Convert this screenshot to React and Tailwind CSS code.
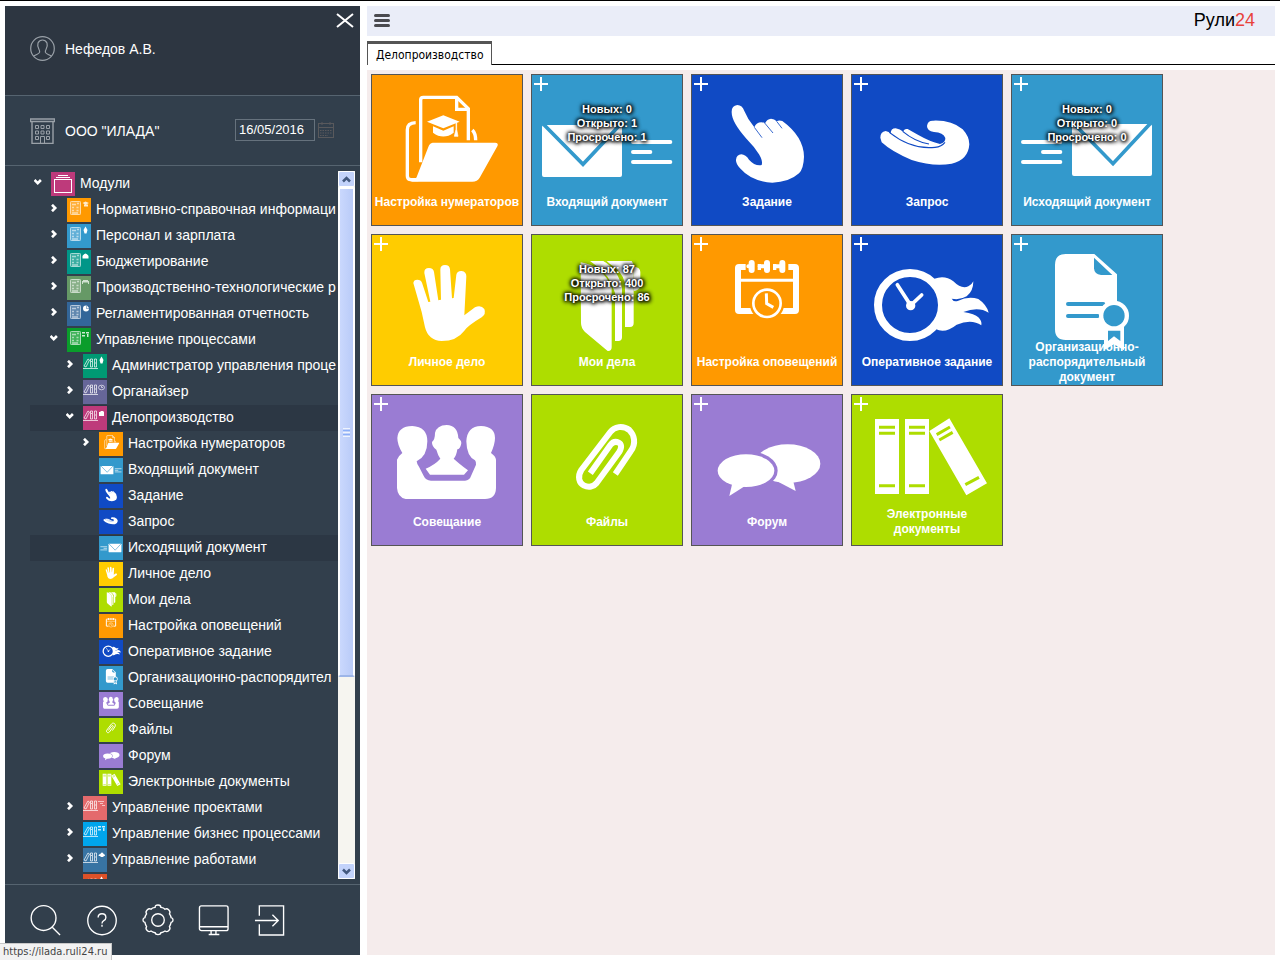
import { useState } from 'react';

const ORANGE = '#ff9900';
const BLUE = '#3399cc';
const NAVY = '#104ac4';
const LIME = '#aedd00';
const VIOLET = '#9a7cd3';

// Every tile picture is drawn on a 450 x 450 field
const pictures = {
    numerators: {
        origin: '21 30',
        art: (
            <>
                <g fill="none" stroke="#fff" strokeWidth="10">
                    <path d="M152 173Q127 174 127 194V333Q127 344 138 344H160" />
                    <path d="M167 292V104Q167 97 175 97H275L310 131V226" />
                    <path d="M275 97V133H310" />
                    <path d="M322 195Q332 205 332 226" />
                </g>
                <path d="M203 233H390Q402 234 397 244L344 338Q337 350 322 350H135Q150 348 155 336L190 246Q194 234 203 233Z" />
                <path d="M186 170L235 151L284 170L235 190ZM204 184L235 197L266 184V203Q235 226 204 203Z" />
                <path d="M273 174V193L268 214H279L275 193V174Z" stroke="#fff" strokeWidth="2" />
            </>
        ),
    },
    inbox: {
        origin: '501 30',
        art: (
            <>
                <rect x="531" y="180" width="240" height="156" rx="6" />
                <path d="M534 176L654 298L768 176" fill="none" stroke={BLUE} strokeWidth="11" />
                <path d="M804 231H916M804 261H856M804 291H916" stroke="#fff" strokeWidth="12" strokeLinecap="round" />
            </>
        ),
    },
    task: {
        origin: '21 30',
        art: (
            <>
                <path d="M140 142Q139 122 157 120Q172 120 178 138Q188 163 208 187Q214 172 229 172Q236 172 240 175Q246 162 258 161Q268 162 275 169Q282 164 292 168Q356 215 357 275Q356 310 342 325Q312 352 262 353Q200 350 165 310Q152 295 153 284Q155 269 169 268Q182 269 192 284Q210 304 230 300Q234 288 222 268Q208 245 185 222Q140 172 140 142Z" />
                <path d="M208 187L231 218M239 174L264 204M275 169L291 190" stroke={NAVY} strokeWidth="2.5" />
            </>
        ),
    },
    request: {
        origin: '501 30',
        art: (
            <>
                <path d="M586 218Q586 200 602 198Q612 200 617 206Q617 190 632 190Q645 193 655 200Q657 190 668 192L700 210Q735 230 765 237Q782 232 781 219Q775 202 747 201Q726 198 726 183Q728 166 745 167Q800 165 833 193Q853 215 853 238Q850 285 800 296Q745 306 680 285Q620 260 590 232Z" />
                <path d="M613 202Q680 255 750 247Q770 245 780 232M653 199Q690 230 732 237" fill="none" stroke={NAVY} strokeWidth="3.5" />
            </>
        ),
    },
    outbox: {
        origin: '21 30',
        art: (
            <>
                <rect x="201" y="177" width="240" height="156" rx="6" />
                <path d="M204 173L324 296L438 173" fill="none" stroke={BLUE} strokeWidth="11" />
                <path d="M54 231H166M114 261H166M54 291H166" stroke="#fff" strokeWidth="12" strokeLinecap="round" />
            </>
        ),
    },
    personal: {
        origin: '21 21',
        art: (
            <path d="M145 165Q146 155 157 155Q168 155 171 164L190 222L196 221L178 135Q177 120 192 120Q205 120 207 132L220 217L228 215L226 125Q226 111 240 111Q254 111 255 124L261 211L266 210L274 140Q277 128 290 129Q304 131 304 145L298 262L330 238Q348 230 358 243Q364 258 350 268Q310 292 298 308Q275 339 230 339Q190 338 180 298L170 252Z" />
        ),
    },
    cases: {
        origin: '501 21',
        art: (
            <>
                <path d="M647 103Q715 115 740 180V358Q740 370 728 369L660 312Q648 300 648 285Z" />
                <path d="M675 99H715Q760 125 771 180V328Q771 339 760 339H750V195Q735 140 690 110Z" />
                <path d="M725 99H800L806 110V285Q806 297 795 297H780V165Q772 130 735 108Z" />
                <path d="M806 116Q826 117 826 132V172Q824 188 806 189Z" />
            </>
        ),
    },
    alerts: {
        origin: '21 21',
        art: (
            <>
                <rect x="159" y="117" width="174" height="132" rx="3" fill="none" stroke="#fff" strokeWidth="18" />
                <path d="M168 157H324" stroke="#fff" strokeWidth="9" />
                <path d="M182 105H218V127H182ZM228 105H264V127H228ZM274 105H310V127H274Z" fill={ORANGE} />
                <g stroke="#fff" strokeWidth="18" strokeLinecap="round">
                    <path d="M200 105V126M246 105V126M292 105V126" />
                    <path d="M190 115H200M224 115H246M271 115H292" strokeWidth="12" />
                </g>
                <circle cx="246" cy="226" r="52" fill={ORANGE} />
                <circle cx="246" cy="226" r="41" fill="none" stroke="#fff" strokeWidth="8" />
                <path d="M244 196L245 227L265 238" fill="none" stroke="#fff" strokeWidth="9" />
            </>
        ),
    },
    urgent: {
        origin: '501 21',
        art: (
            <>
                <circle cx="675" cy="231" r="96" fill="none" stroke="#fff" strokeWidth="24" />
                <path d="M748 152Q780 140 805 160Q830 185 850 175Q862 168 865 160Q865 190 845 205Q825 217 800 212Q806 223 818 219Q850 203 880 213Q905 230 911 254Q880 235 835 252Q870 258 880 268Q892 280 889 292Q860 272 815 290Q780 318 752 303Q770 270 766 231Q768 190 748 152Z" />
                <path d="M637 170L677 232L710 201" fill="none" stroke="#fff" strokeWidth="11" strokeLinecap="round" />
                <circle cx="677" cy="233" r="14" />
            </>
        ),
    },
    order: {
        origin: '21 30',
        art: (
            <>
                <path d="M182 87H268L336 148V230L300 300V345H182Q150 345 150 313V120Q150 87 182 87Z" />
                <path d="M267 98V130Q268 148 288 150H322Z" fill={BLUE} />
                <path d="M189 237H295M189 273H278" stroke={BLUE} strokeWidth="12" strokeLinecap="round" />
                <circle cx="327" cy="272" r="45" />
                <circle cx="327" cy="272" r="32" fill={BLUE} />
                <path d="M297 300V376L327 358L357 376V300L345 312H309Z" />
                <path d="M309 317H346V348L327 334L309 348Z" fill={BLUE} />
            </>
        ),
    },
    meeting: {
        origin: '21 21',
        art: (
            <>
                <path d="M97 150Q99 115 142 114Q187 116 187 160Q187 205 155 220Q155 226 162 236L175 262Q182 278 198 278H300Q314 277 318 264L333 230Q335 224 330 217Q305 205 304 160Q306 115 348 114Q390 116 390 150Q390 168 378 195Q392 205 393 215V300Q392 333 360 333H122Q98 328 96 300V215Q102 202 112 195Q97 170 97 150Z" />
                <path d="M245 111Q278 112 280 150Q292 160 288 170Q285 182 277 184Q274 205 266 212Q280 225 309 247L297 260H195L182 242Q210 230 226 212Q218 200 214 185Q200 175 201 162Q210 155 210 135Q215 112 245 111Z" />
            </>
        ),
    },
    files: {
        origin: '501 21',
        art: (
            <path
                d="M751 258L797 190C815 165 807 140 793 126C773 111 748 116 736 132L649 246C636 266 643 285 656 292C671 300 686 296 695 285L762 193C772 177 769 168 761 164C751 159 743 162 736 171L676 256"
                fill="none"
                stroke="#fff"
                strokeWidth="18"
            />
        ),
    },
    forum: {
        origin: '21 21',
        art: (
            <>
                <ellipse cx="308" cy="227" rx="98" ry="58" />
                <path d="M262 272L332 309L323 272Z" />
                <ellipse cx="183" cy="248" rx="95" ry="60" fill={VIOLET} />
                <ellipse cx="183" cy="248" rx="85" ry="49" />
                <path d="M142 285L133 324L180 294Z" />
            </>
        ),
    },
    books: {
        origin: '501 21',
        art: (
            <>
                <path d="M570 93H642V318H570ZM660 93H732V318H660ZM733 129L793 91L906 286L844 322Z" />
                <path
                    d="M582 118H630M582 136H630M582 293H630M672 118H720M672 136H720M672 293H720M755 140L795 117M763 156L803 133M841 290L882 268"
                    stroke={LIME}
                    strokeWidth="9"
                />
            </>
        ),
    },
};

const Picture = ({ name, className }) => (
    <svg viewBox={`${pictures[name].origin} 450 450`} fill="#fff" className={className} aria-hidden="true">
        {pictures[name].art}
    </svg>
);

const tiles = [
    { label: 'Настройка нумераторов', picture: 'numerators', bg: 'bg-[#ff9900]' },
    { label: 'Входящий документ', picture: 'inbox', bg: 'bg-[#3399cc]', add: true, stats: [0, 1, 1] },
    { label: 'Задание', picture: 'task', bg: 'bg-[#104ac4]', add: true },
    { label: 'Запрос', picture: 'request', bg: 'bg-[#104ac4]', add: true },
    { label: 'Исходящий документ', picture: 'outbox', bg: 'bg-[#3399cc]', add: true, stats: [0, 0, 0] },
    { label: 'Личное дело', picture: 'personal', bg: 'bg-[#ffcc00]', add: true },
    { label: 'Мои дела', picture: 'cases', bg: 'bg-[#aedd00]', stats: [87, 400, 86] },
    { label: 'Настройка оповещений', picture: 'alerts', bg: 'bg-[#ff9900]', add: true },
    { label: 'Оперативное задание', picture: 'urgent', bg: 'bg-[#104ac4]', add: true },
    {
        label: 'Организационно-распорядительный документ',
        short: 'Организационно-распорядител',
        picture: 'order',
        bg: 'bg-[#3399cc]',
        add: true,
    },
    { label: 'Совещание', picture: 'meeting', bg: 'bg-[#9a7cd3]', add: true },
    { label: 'Файлы', picture: 'files', bg: 'bg-[#aedd00]' },
    { label: 'Форум', picture: 'forum', bg: 'bg-[#9a7cd3]', add: true },
    { label: 'Электронные документы', picture: 'books', bg: 'bg-[#aedd00]', add: true },
];

// Small marks in the upper right corner of the module icons
const marks = {
    cap: <path d="M15.500 5l3-1.500 3.500 1.500-3.500 1.800zM17 6.500h4v2h-4z" opacity="0.8" />,
    person: <path d="M18.500 2.500l2 3.500-1 3.500h-2l-1-3.500z" />,
    chat: <path d="M15.500 6q3-5 6 0v2.500h-6z" />,
    printer: <path d="M16 4h5v1h1v3h-1v-1.500h-5v1.500h-1v-3h1z" opacity="0.7" />,
    pie: <path d="M19 3.500a3 3 0 1 0 3 3h-3zM19.500 3v3h2.500z" />,
    flow: <path d="M15 4h3v1.500h-3zM19 4h3v1.500h-3zM15 7h3v1.500h-3zM20 6h1.500v3h-1.500z" opacity="0.8" />,
    clock: (
        <g fill="none" stroke="#fff" strokeWidth="0.8" opacity="0.8">
            <ellipse cx="18.500" cy="7.500" rx="3" ry="2.300" />
            <path d="M18.500 6v1.500h1.500" />
        </g>
    ),
    folder: <path d="M16 6h1l1-1h2l1 1v4h-5z" />,
    gantt: <path d="M15 5h6v1h-6zM17 7h3v1h-3zM19 9h3v1h-3z" opacity="0.6" />,
    worker: <path d="M15.500 8q0-2 2-2 0-1.500 1.500-1.500t1.500 1.500q1.500 0 1.500 2h-1.500v1h-3v-1z" />,
};

const ModuleIcon = ({ kind, mark }) => (
    <svg viewBox="0 0 24 24" className="size-6" fill="#fff" aria-hidden="true">
        {kind === 'stack' && (
            <g fill="none" stroke="#fff" strokeWidth="1">
                <rect x="3.500" y="7.500" width="17" height="13" />
                <path d="M5 5.500h14M7 3.500h10" />
            </g>
        )}
        {kind === 'calc' && (
            <g opacity="0.65">
                <rect x="3" y="3" width="11" height="14" rx="1" fill="#fff" opacity="0.35" />
                <rect x="3.500" y="3.500" width="10" height="13" rx="1" fill="none" stroke="#fff" />
                <path d="M5 6.500h4M10 5.500h2M5 9.500h2M9.500 9.500h2M5 12.500h2M9.500 12.500h2M5 15h6" stroke="#fff" strokeWidth="1.500" />
            </g>
        )}
        {kind === 'office' && (
            <g opacity="0.7" fill="none" stroke="#fff">
                <path d="M0 14.500h15M1 12l4-7 1.500 1-3.500 7zM7.500 5v8h2v-8zM11.500 5v8h2v-8zM8 7.500h1M12 9h1" />
            </g>
        )}
        {marks[mark]}
    </svg>
);

const tree = [
    { level: 0, label: 'Модули', kind: 'stack', bg: 'bg-[#be3a7b]', state: 'open' },
    { level: 1, label: 'Нормативно-справочная информаци', kind: 'calc', mark: 'cap', bg: 'bg-[#ff9900]', state: 'closed' },
    { level: 1, label: 'Персонал и зарплата', kind: 'calc', mark: 'person', bg: 'bg-[#3399cc]', state: 'closed' },
    { level: 1, label: 'Бюджетирование', kind: 'calc', mark: 'chat', bg: 'bg-[#009688]', state: 'closed' },
    { level: 1, label: 'Производственно-технологические р', kind: 'calc', mark: 'printer', bg: 'bg-[#669966]', state: 'closed' },
    { level: 1, label: 'Регламентированная отчетность', kind: 'calc', mark: 'pie', bg: 'bg-[#336699]', state: 'closed' },
    { level: 1, label: 'Управление процессами', kind: 'calc', mark: 'flow', bg: 'bg-[#0a9d2b]', state: 'open' },
    { level: 2, label: 'Администратор управления проце', kind: 'office', mark: 'person', bg: 'bg-[#009973]', state: 'closed' },
    { level: 2, label: 'Органайзер', kind: 'office', mark: 'clock', bg: 'bg-[#666699]', state: 'closed' },
    { level: 2, label: 'Делопроизводство', kind: 'office', mark: 'folder', bg: 'bg-[#be3a7b]', state: 'open', active: true },
    ...tiles.map((tile, i) => ({
        ...tile,
        label: tile.short || tile.label,
        level: 3,
        state: i === 0 ? 'closed' : null,
        active: i === 4,
    })),
    { level: 2, label: 'Управление проектами', kind: 'office', mark: 'gantt', bg: 'bg-[#e46a6c]', state: 'closed' },
    { level: 2, label: 'Управление бизнес процессами', kind: 'office', mark: 'flow', bg: 'bg-[#00a5ec]', state: 'closed' },
    { level: 2, label: 'Управление работами', kind: 'office', mark: 'worker', bg: 'bg-[#3874a3]', state: 'closed' },
    { level: 2, label: '', kind: 'office', mark: 'person', bg: 'bg-[#dd5128]' },
];

const indents = ['pl-1', 'pl-5', 'pl-9', 'pl-13'];

const TreeRow = ({ item }) => (
    <li className={`flex h-[26px] items-center ${indents[item.level]} ${item.active ? 'bg-[#2c3744]' : ''}`}>
        <span className="flex w-[17px] shrink-0 pb-1">
            {item.state && (
                <button type="button" aria-label={item.state === 'open' ? 'Свернуть' : 'Развернуть'}>
                    <svg viewBox="0 0 8 8" className="size-2" fill="none" stroke="#fff" strokeWidth="2.600">
                        <path d={item.state === 'open' ? 'M.5 2l3.200 3.200 3.200-3.200' : 'M2 .8l3.200 3.200-3.200 3.200'} />
                    </svg>
                </button>
            )}
        </span>
        <a href="#" className="flex items-center gap-[5px] whitespace-nowrap">
            <span className={`size-6 shrink-0 ${item.bg}`}>
                {item.picture ? <Picture name={item.picture} className="size-6" /> : <ModuleIcon kind={item.kind} mark={item.mark} />}
            </span>
            <span className="pb-0.5">{item.label}</span>
        </a>
    </li>
);

const ScrollButton = ({ label, d }) => (
    <button
        type="button"
        aria-label={label}
        className="flex h-4 w-full items-center justify-center rounded-xs border border-white bg-[#c3d3fb]"
    >
        <svg viewBox="0 0 9 9" className="size-[9px]" fill="none" stroke="#43597f" strokeWidth="2.500">
            <path d={d} />
        </svg>
    </button>
);

const Scrollbar = () => (
    <div className="flex w-[17px] shrink-0 flex-col bg-[#f6f5f0]">
        <ScrollButton label="Вверх" d="M1 6.500l3.500-3.500 3.500 3.500" />
        <div className="flex min-h-0 flex-1 flex-col">
            <div className="flex basis-[72.5%] flex-col items-center justify-center gap-px rounded-xs border-2 border-white border-b-[#9db5e8] bg-linear-to-r from-[#cad8fd] to-[#b9cbf8]">
                <span className="h-px w-[7px] bg-[#eef4fe]" />
                <span className="h-px w-[7px] bg-[#8cb0f8]" />
                <span className="h-px w-[7px] bg-[#eef4fe]" />
                <span className="h-px w-[7px] bg-[#8cb0f8]" />
                <span className="h-px w-[7px] bg-[#eef4fe]" />
            </div>
        </div>
        <ScrollButton label="Вниз" d="M1 2.500l3.500 3.500 3.500-3.500" />
    </div>
);

const footerIcons = [
    {
        label: 'Поиск',
        art: (
            <>
                <circle cx="14" cy="14.500" r="12.800" />
                <path d="M23 24l8 8" />
            </>
        ),
    },
    {
        label: 'Помощь',
        art: (
            <>
                <circle cx="16.500" cy="17" r="14.700" />
                <path d="M12.500 14q0-4 4-4t4 3.800q0 2.200-2.200 3.400-1.800 1-1.800 2.800M16.500 21.500v2" />
            </>
        ),
    },
    {
        label: 'Настройки',
        art: (
            <>
                <path d="M13.500 3.500q0-2.500 3-2.500t3 2.500q3 .5 4.200 1.900 2-1.200 4 .8t.6 4q1.500 2 1.700 3.800 2 .3 2 2.500t-2 2.500q-.5 2.500-1.700 4.300 1.400 2-.6 4t-4 .6q-2 1.400-4.200 1.700-.3 2-3 2t-3-2q-2.200-.3-4.200-1.700-2 1.400-4-.6t-.6-4q-1.200-1.800-1.700-4.300-2-.3-2-2.500t2-2.500q.2-1.800 1.700-3.800-1.400-2 .6-4t4-.8q1.200-1.400 4.200-1.900z" />
                <circle cx="16.500" cy="16.500" r="6.500" />
            </>
        ),
    },
    {
        label: 'Рабочий стол',
        art: (
            <>
                <rect x="1.500" y="2" width="29.500" height="25.500" rx="2" />
                <path d="M1.500 23.500h29.500M13.500 27.500v3.500M18.500 27.500v3.500M11 31.500h11" />
            </>
        ),
    },
    {
        label: 'Выход',
        art: <path d="M5.500 12v-10h25v30h-25v-11M1 17h24M19 11l6 6-6 6" />,
    },
];

const Sidebar = ({ onClose }) => {
    const [date, setDate] = useState('16/05/2016');

    return (
        <aside className="flex w-[355px] shrink-0 flex-col bg-[#323f4c] font-['Liberation_Sans',Arial,sans-serif] text-sm text-white">
            <div className="flex h-[90px] shrink-0 items-center gap-2.5 border-b border-[#566470] bg-[#2d3641] pr-1.5 pb-1 pl-[25px]">
                <svg viewBox="0 0 25 25" className="size-[25px]" fill="none" stroke="#9aa1a8" strokeWidth="1.200" aria-hidden="true">
                    <circle cx="12.500" cy="12.500" r="11.800" />
                    <path d="M3.500 20q5-2 6-3.500.5-1.500-.5-3-2-3-1-6.500 1.500-3 4.500-3t4.500 3q1 3.500-1 6.500-1 1.500-.5 3 1 1.500 6 3.500" />
                </svg>
                <span>Нефедов А.В.</span>
                <button type="button" aria-label="Закрыть" className="ml-auto self-start pt-[7px]" onClick={onClose}>
                    <svg viewBox="0 0 18 16" className="h-4 w-[18px]" stroke="#fff" strokeWidth="2">
                        <path d="M1 1l16 13M17 1l-16 13" />
                    </svg>
                </button>
            </div>

            <div className="flex h-[70px] shrink-0 items-center gap-2.5 border-b border-[#566470] pr-[26px] pl-[25px]">
                <svg viewBox="0 0 25 26" className="h-[26px] w-[25px]" fill="none" stroke="#9aa1a8" aria-hidden="true">
                    <path d="M.5 1v2.500h24v-2.500zM2 4v21.500h21v-21.500" strokeWidth="1.400" />
                    <path d="M5.500 7.500h3v3h-3zM11 7.500h3v3h-3zM16.500 7.500h3v3h-3zM5.500 13h3v3h-3zM11 13h3v3h-3zM16.500 13h3v3h-3zM5.500 18.500h3v3h-3zM16.500 18.500h3v3h-3zM10.500 25v-6.500h4v6.500" />
                </svg>
                <span>ООО "ИЛАДА"</span>
                <div className="ml-auto flex items-center gap-[3px] pb-0.5">
                    <input
                        aria-label="Дата"
                        value={date}
                        onChange={e => setDate(e.target.value)}
                        className="h-[22px] w-20 border border-[#66727d] bg-transparent px-[3px] text-[13px]"
                    />
                    <button type="button" aria-label="Календарь">
                        <svg viewBox="0 0 16 16" className="size-4" fill="none" stroke="#59595c">
                            <rect x=".5" y="1.500" width="15" height="14" />
                            <path d="M0 5.500h16M4 0v3M12 0v3" />
                            <path d="M2 8.500h12M2 11h12M2 13.500h8" strokeDasharray="1.500 1" />
                        </svg>
                    </button>
                </div>
            </div>

            <div className="flex min-h-0 flex-1 overflow-hidden py-[5px] pr-[5px] pl-[25px]">
                <ul className="min-w-0 flex-1 overflow-hidden">
                    {tree.map(item => (
                        <TreeRow key={item.label} item={item} />
                    ))}
                </ul>
                <Scrollbar />
            </div>

            <div className="flex h-[71px] shrink-0 items-center gap-6 border-t border-[#566470] pl-[25px]">
                {footerIcons.map(icon => (
                    <button key={icon.label} type="button" aria-label={icon.label}>
                        <svg viewBox="0 0 33 33" className="size-8" fill="none" stroke="#fff" strokeWidth="1.400">
                            {icon.art}
                        </svg>
                    </button>
                ))}
            </div>
        </aside>
    );
};

const Tile = ({ tile }) => (
    <div className={`grid size-[152px] border border-[#555] ${tile.bg} font-['Liberation_Sans',Arial,sans-serif] font-bold text-white`}>
        <Picture name={tile.picture} className="col-start-1 row-start-1 size-[150px]" />
        <a href="#" className="col-start-1 row-start-1 flex flex-col justify-end text-center">
            {tile.stats && (
                <span className="flex-1 pt-[27px] text-[11px] leading-[14px] [text-shadow:0_0_3px_#000,1px_1px_4px_#000,0_0_4px_#000,0_0_5px_#000]">
                    Новых: {tile.stats[0]}
                    <br />
                    Открыто: {tile.stats[1]}
                    <br />
                    Просрочено: {tile.stats[2]}
                </span>
            )}
            <span className="flex h-[46px] items-center justify-center text-xs leading-[15px]">{tile.label}</span>
        </a>
        {tile.add && (
            <button type="button" aria-label="Добавить" className="col-start-1 row-start-1 m-0.5 self-start justify-self-start">
                <svg viewBox="0 0 14 14" className="size-3.5" stroke="#fff" strokeWidth="2">
                    <path d="M7 0v14M0 7h14" />
                </svg>
            </button>
        )}
    </div>
);

const App = () => {
    const [sidebarOpen, setSidebarOpen] = useState(true);

    return (
        <div className="flex h-screen gap-[7px] border-t border-black bg-white p-[5px]">
            {sidebarOpen && <Sidebar onClose={() => setSidebarOpen(false)} />}

            <main className="flex min-w-0 flex-1 flex-col">
                <header className="flex h-[30px] shrink-0 items-center justify-between bg-[#eaedf8] pr-5 pb-0.5 pl-[7px]">
                    <button type="button" aria-label="Меню" className="flex flex-col gap-0.5" onClick={() => setSidebarOpen(!sidebarOpen)}>
                        <span className="h-[3px] w-4 rounded-xs bg-[#4a4a4f]" />
                        <span className="h-[3px] w-4 rounded-xs bg-[#4a4a4f]" />
                        <span className="h-[3px] w-4 rounded-xs bg-[#4a4a4f]" />
                    </button>
                    <span className="font-['Liberation_Sans',Arial,sans-serif] text-lg text-black">
                        Рули<span className="text-[#e8423c]">24</span>
                    </span>
                </header>

                <nav className="mt-[5px] flex h-6 shrink-0 border-b border-black">
                    <button
                        type="button"
                        className="-mb-px border-x border-t-3 border-[#555] bg-white px-2 font-['DejaVu_Sans_Condensed','DejaVu_Sans',sans-serif] text-xs text-black"
                    >
                        Делопроизводство
                    </button>
                </nav>

                <section className="mt-[5px] flex flex-1 flex-wrap content-start gap-2 bg-[#f5ecec] p-1">
                    {tiles.map(tile => (
                        <Tile key={tile.label} tile={tile} />
                    ))}
                </section>
            </main>

            <div className="fixed bottom-0 left-0 border-t border-r border-[#c8c8c8] bg-[#f2f2f2] px-[3px] pr-1 font-['DejaVu_Sans_Condensed','DejaVu_Sans',sans-serif] text-[11px] leading-4 text-[#444]">
                https://ilada.ruli24.ru
            </div>
        </div>
    );
};

export default App;
